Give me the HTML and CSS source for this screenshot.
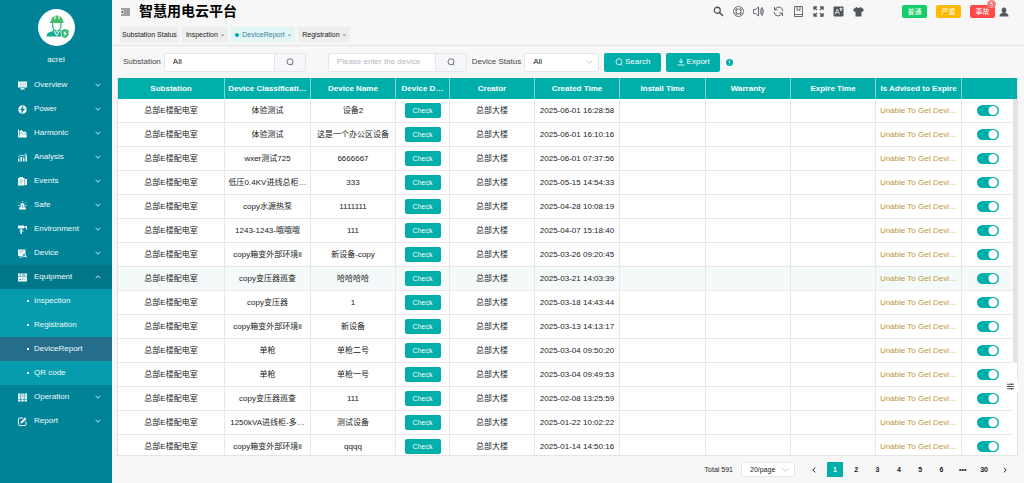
FILE: index.html
```
<!DOCTYPE html>
<html lang="en">
<head>
<meta charset="utf-8">
<title>智慧用电云平台</title>
<link rel="stylesheet" href="styles.css">
</head>
<body>
<svg class="defs" aria-hidden="true">
  <symbol id="down" viewBox="0 0 10 10"><path d="M1 3l4 4 4-4" fill="none" stroke="currentColor" stroke-width="1.4"/></symbol>
  <symbol id="search" viewBox="0 0 16 16"><circle cx="8" cy="7.5" r="6" fill="none" stroke="currentColor" stroke-width="1.6"/><path d="M11 12l3 3" stroke="currentColor" stroke-width="1.6"/></symbol>
</svg>
<div class="app">
  <aside class="sidebar">
    <div class="profile">
      <div class="avatar">
        <svg viewBox="0 0 37 37">
          <path d="M13 12.500c0-3 1.500-4.800 3.500-5.300v3h1V6.500h3v3.700h1v-3c2 .5 3.500 2.300 3.500 5.300h.5V14H12v-1.500z" fill="#48bd6c"/>
          <path d="M14.500 14c0 5.500 1.500 8 4.300 8s4.300-2.500 4.300-8" fill="none" stroke="#35b87c" stroke-width="1.200"/>
          <path d="M15.500 20.500l3.300 3 3.300-3 1.400 1.500v3.500l1.500 2H8.500c0-3 2-4.500 5.500-5z" fill="#14ae96"/>
          <path d="M16 22l2.800 4.500L21.500 22" fill="none" stroke="#fff" stroke-width="1"/>
          <path d="M27 19.500l4 1.500v3.500c0 2.500-1.500 4-4 5-2.500-1-4-2.500-4-5V21z" fill="#3dba78" stroke="#fff" stroke-width=".7"/>
          <path d="M27.500 21.500l-2.200 3.200h1.500l-.5 2.700 2.500-3.500h-1.600z" fill="#fff"/></svg>
      </div>
      <div class="username">acrel</div>
    </div>
    <nav class="menu">
      <a class="item" href="#"><svg class="ico" viewBox="0 0 18 18"><path d="M0 1h18v12H0zM6 14h6l2 3H4z" fill="currentColor"/><path d="M3 4h5M3 7h5M3 10h5M10 4h5v6h-5z" stroke="#7fc1cb" fill="none"/></svg><span>Overview</span><svg class="chev"><use href="#down"/></svg></a>
      <a class="item" href="#"><svg class="ico" viewBox="0 0 18 18"><circle cx="9" cy="9" r="8.500" fill="currentColor"/><path d="M10 2L5 10h3l-1 6 6-8H9.500zM0 9h4M14 9h4" fill="#008397" stroke="#008397" stroke-width=".8"/></svg><span>Power</span><svg class="chev"><use href="#down"/></svg></a>
      <a class="item" href="#"><svg class="ico" viewBox="0 0 18 18"><path d="M0 1h2v14h16v2H0zM3 4l4-2 4 4 3-1 3 2v8H3z" fill="currentColor"/><path d="M3 9l4-2 4 4 5-2" stroke="#008397" fill="none"/></svg><span>Harmonic</span><svg class="chev"><use href="#down"/></svg></a>
      <a class="item" href="#"><svg class="ico" viewBox="0 0 18 18"><path d="M0 11h3v6H0zM5 8h3v9H5zM10 9h3v8h-3zM15 4h3v13h-3z" fill="currentColor"/><path d="M0 8l6-4 4 2 7-5" stroke="currentColor" stroke-width="1.500" fill="none"/></svg><span>Analysis</span><svg class="chev"><use href="#down"/></svg></a>
      <a class="item" href="#"><svg class="ico" viewBox="0 0 18 18"><path d="M0 2h3V0h7v2h3v15H0zM14 4h4v12h-4z" fill="currentColor"/><path d="M3 6h7M3 9h7M3 12h5" stroke="#4fa8b6"/></svg><span>Events</span><svg class="chev"><use href="#down"/></svg></a>
      <a class="item" href="#"><svg class="ico" viewBox="0 0 18 18"><path d="M5 13V8c0-5 8-5 8 0v5h3v4H2v-4z" fill="currentColor"/><path d="M9 0v3M2 3l2 2M16 3l-2 2M0 9h3M15 9h3" stroke="currentColor" stroke-width="1.500"/><path d="M9 7l-1 4h2l-1 3" stroke="#008397" fill="none"/></svg><span>Safe</span><svg class="chev"><use href="#down"/></svg></a>
      <a class="item" href="#"><svg class="ico" viewBox="0 0 18 18"><path d="M0 1h12v6H0zM13 2h5v7h-2V6h-3zM5 8h3v3h3v2H8v5H5v-5H3v-2h2z" fill="currentColor"/></svg><span>Environment</span><svg class="chev"><use href="#down"/></svg></a>
      <a class="item" href="#"><svg class="ico" viewBox="0 0 18 18"><path d="M0 1h15v8l-4-1-3 3 1 3H0z" fill="currentColor"/><circle cx="12" cy="12" r="3" fill="none" stroke="currentColor" stroke-width="2"/><path d="M14 14l4 3M3 16h6" stroke="currentColor" stroke-width="2"/><path d="M3 4h9M3 7h5" stroke="#4fa8b6"/></svg><span>Device</span><svg class="chev"><use href="#down"/></svg></a>
      <a class="item open" href="#"><svg class="ico" viewBox="0 0 18 18"><path d="M0 1h18v6H0zM0 8h18v9H0z" fill="currentColor"/><path d="M3 4h3M8 4h7M3 13h3M8 12h3M13 12h2" stroke="#007789" stroke-width="1.600" fill="none"/></svg><span>Equipment</span><svg class="chev up"><use href="#down"/></svg></a>
      <div class="submenu">
        <a class="sub" href="#">Inspection</a>
        <a class="sub" href="#">Registration</a>
        <a class="sub current" href="#">DeviceReport</a>
        <a class="sub" href="#">QR code</a>
      </div>
      <a class="item" href="#"><svg class="ico" viewBox="0 0 18 18"><path d="M0 1h5v11H0zM6.500 1h5v11h-5zM13 1h5v11h-5zM0 13h5v4H0zM6.500 13h5v4h-5zM13 13h5v4h-5z" fill="currentColor"/><path d="M2.500 3v4M9 3v4M15.500 3v4" stroke="#4fa8b6" stroke-width="1.200"/></svg><span>Operation</span><svg class="chev"><use href="#down"/></svg></a>
      <a class="item" href="#"><svg class="ico" viewBox="0 0 18 18"><path d="M10 2H3q-2 0-2 2v11q0 2 2 2h11q2 0 2-2V9" fill="none" stroke="currentColor" stroke-width="2"/><path d="M5 13l1-4 8-8 3 3-8 8z" fill="currentColor"/></svg><span>Report</span><svg class="chev"><use href="#down"/></svg></a>
    </nav>
  </aside>

  <main class="main">
    <header class="topbar">
      <button class="fold" aria-label="Collapse menu"><svg viewBox="0 0 18 16"><path d="M0 2h18M5 6h13M5 10h13M0 14h18" stroke="#333" stroke-width="1.800"/><path d="M0 8l3.500-3v6z" fill="#333"/></svg></button>
      <h1>智慧用电云平台</h1>
      <div class="tools">
        <button aria-label="Search"><svg viewBox="0 0 22 22"><circle cx="8.500" cy="8.500" r="6" fill="none" stroke="currentColor" stroke-width="2.600"/><path d="M13 13l7 7" stroke="currentColor" stroke-width="3.200"/></svg></button>
        <button aria-label="Help"><svg viewBox="0 0 22 22" fill="none" stroke="currentColor" stroke-width="1.600"><circle cx="11" cy="11" r="10"/><circle cx="11" cy="11" r="5"/><path d="M5.500 3l3 4M16.500 3l-3 4M5.500 19l3-4M16.500 19l-3-4M3 6l4 3M19 6l-4 3M3 16l4-3M19 16l-4-3"/></svg></button>
        <button aria-label="Sound"><svg viewBox="0 0 22 22" fill="none" stroke="currentColor" stroke-width="1.700"><path d="M1 7h4l6-5v18l-6-5H1zM14 7q3 4 0 8M16 4q5 7 0 14M18 2q6 9 0 18"/></svg></button>
        <button aria-label="Refresh"><svg viewBox="0 0 22 22" fill="none" stroke="currentColor" stroke-width="1.800"><path d="M4 7q3-5 8-5 7 1 8 8M18 15q-3 5-8 5-7-1-8-8M3 2v6h6M19 20v-6h-6"/></svg></button>
        <button aria-label="Manual"><svg viewBox="0 0 22 22" fill="none" stroke="currentColor" stroke-width="1.700"><path d="M3 1h16v20H3zM3 17h16M8 1v8l3-2 3 2V1"/></svg></button>
        <button aria-label="Fullscreen"><svg viewBox="0 0 22 22" fill="none" stroke="currentColor" stroke-width="2.600"><path d="M2 8V2h6M14 2h6v6M20 14v6h-6M8 20H2v-6M2 2l6 6M20 2l-6 6M2 20l6-6M20 20l-6-6"/></svg></button>
        <button aria-label="Language"><svg viewBox="0 0 22 22"><rect x="1" y="1" width="20" height="20" rx="2" fill="currentColor"/><path d="M4 17L8.500 6 13 17M5.500 13h6M13 5h6M16 3v2M14 10l4-5M14 6l4 4" fill="none" stroke="#f7f7f7" stroke-width="1.500"/></svg></button>
        <button aria-label="Theme"><svg viewBox="0 0 22 22"><path d="M7 2q4 4 8 0l7 5-3 5-2-1v10H5V11l-2 1-3-5z" fill="currentColor"/></svg></button>
      </div>
      <div class="alarms">
        <button class="alarm normal">普通</button>
        <button class="alarm severe">严重</button>
        <button class="alarm accident">事故<span class="badge">5</span></button>
        <button class="user" aria-label="Account"><svg viewBox="0 0 22 22"><path d="M11 1c7 0 6 10 2.500 12 5 .5 7.500 2 7.500 8H1c0-6 2.500-7.500 7.500-8C5 11 4 1 11 1z" fill="#555a62"/></svg></button>
      </div>
    </header>
    <nav class="tabs">
      <a href="#" class="tab">Substation Status</a>
      <a href="#" class="tab">Inspection<span class="x">×</span></a>
      <a href="#" class="tab on"><i class="dot"></i>DeviceReport<span class="x">×</span></a>
      <a href="#" class="tab">Registration<span class="x">×</span></a>
    </nav>

    <form class="filters">
      <label for="station">Substation</label>
      <div class="group station"><input id="station" type="text" value="All"><button type="button" aria-label="Find substation"><svg><use href="#search"/></svg></button></div>
      <div class="group device"><input type="text" aria-label="Device name" placeholder="Please enter the device name"><button type="button" aria-label="Find device"><svg><use href="#search"/></svg></button></div>
      <label for="status">Device Status</label>
      <div class="pick status"><select id="status"><option>All</option></select><svg><use href="#down"/></svg></div>
      <button type="button" class="btn search"><svg><use href="#search"/></svg>Search</button>
      <button type="button" class="btn export"><svg viewBox="0 0 16 16"><path d="M8 1v9M4 6l4 4 4-4M1 14h14" stroke="currentColor" stroke-width="1.700" fill="none"/></svg>Export</button>
      <svg class="info" viewBox="0 0 14 14"><circle cx="7" cy="7" r="7" fill="#00aeaa"/><path d="M7 3v5M7 9.500V11" stroke="#fff" stroke-width="1.500"/></svg>
    </form>

    <section class="grid">
      <div class="scroll">
        <table>
          <colgroup><col class="c107"><col class="c86"><col class="c85"><col class="c54"><col class="c85"><col class="c85"><col class="c86"><col class="c85"><col class="c85"><col class="c86"><col class="c52"></colgroup>
          <thead><tr><th>Substation</th><th>Device Classificati…</th><th>Device Name</th><th>Device D…</th><th>Creator</th><th>Created Time</th><th>Install Time</th><th>Warranty</th><th>Expire Time</th><th>Is Advised to Expire</th><th></th></tr></thead>
          <tbody id="rows"></tbody>
        </table>
      </div>
      <div class="track"><div class="cap"></div><div class="thumb"></div></div>
    </section>

    <footer class="pager">
      <span>Total 591</span>
      <div class="pick size"><select aria-label="Page size"><option>20/page</option></select><svg><use href="#down"/></svg></div>
      <div class="pages">
        <button aria-label="Previous"><svg viewBox="0 0 10 10"><path d="M7 1L3 5l4 4" fill="none" stroke="currentColor" stroke-width="1.600"/></svg></button>
        <button class="active">1</button><button>2</button><button>3</button><button>4</button><button>5</button><button>6</button><button>•••</button><button>30</button>
        <button aria-label="Next"><svg viewBox="0 0 10 10"><path d="M3 1l4 4-4 4" fill="none" stroke="currentColor" stroke-width="1.600"/></svg></button>
      </div>
    </footer>
    <button class="settings" aria-label="Settings"><svg viewBox="0 0 14 14"><path d="M0 2.500h14M0 7h14M0 11.500h14M9 1v3M4 5.500v3M9 10v3" stroke="#222" stroke-width="1.500"/></svg></button>
  </main>
</div>
<script src="rows.js"></script>
</body>
</html>
```
FILE: styles.css
```
* { box-sizing: border-box; }
body { margin: 0; background: #f7f7f7; color: #222; font: 8px/12px "Liberation Sans", "Noto Sans CJK SC", sans-serif; }
button, input, select { font: inherit; color: inherit; margin: 0; padding: 0; border: 0; background: none; }
a { color: inherit; text-decoration: none; }
svg { display: block; flex: none; }
.defs { position: absolute; width: 0; height: 0; }
.app { display: flex; height: 100vh; overflow: hidden; }

.sidebar { width: 112px; flex: none; background: #008397; color: #f2fbfc; }
.profile { height: 73px; padding-top: 9px; display: flex; flex-direction: column; align-items: center; gap: 8px; }
.avatar { width: 37px; height: 37px; border-radius: 50%; background: #fff; }
.item { display: flex; align-items: center; height: 24px; padding: 0 11px 0 18px; }
.item span { flex: 1; margin-left: 7px; }
.ico { width: 9px; height: 9px; }
.chev { width: 6px; height: 6px; }
.up { transform: rotate(180deg); }
.open { background: #007789; }
.submenu { background: #069cad; }
.sub { display: flex; align-items: center; gap: 5px; height: 24px; padding-left: 27px; }
.sub::before { content: ""; width: 2px; height: 2px; background: #fff; }
.current { background: #246e8c; }

.main { position: relative; flex: 1; min-width: 0; display: flex; flex-direction: column; }
.topbar { display: flex; align-items: center; height: 23px; padding: 0 15px 0 9px; flex: none; color: #50555c; }
.fold svg { width: 9px; height: 8px; }
h1 { margin: 0 0 0 9px; font: bold 14px/20px "Noto Sans CJK SC", sans-serif; color: #000; height: 24px; }
.tools { display: flex; gap: 9px; margin-left: auto; }
.tools svg { width: 11px; height: 11px; }
.tools button { width: 11px; }
.alarms { display: flex; align-items: center; gap: 9px; margin-left: 38px; }
.alarm { position: relative; width: 25px; height: 13px; border-radius: 2px; color: #fff; font-size: 7px; line-height: 13px; }
.normal { background: #13ce66; }
.severe { background: #ffba00; }
.accident { background: #ff4949; }
.badge { position: absolute; top: -5px; right: -1px; width: 9px; height: 8px; border-radius: 4px; background: #f56c6c; border: 1px solid #f99; font-size: 6px; line-height: 6px; }
.user { margin-left: -5px; }
.user svg { width: 10px; height: 10px; }

.tabs { display: flex; gap: 3px; padding: 4px 8px 3px; border-bottom: 1px solid #e6e6e6; flex: none; }
.tab { display: flex; align-items: center; height: 15px; padding: 0 2px; background: #eee; font-size: 7px; color: #222; gap: 3px; }
.tab:not(:first-child) { padding: 0 4px; }
.on { background: #e3f6f6; color: #3d7f9b; }
.dot { width: 4px; height: 4px; border-radius: 50%; background: #00aeaa; }
.x { font-size: 6px; color: #888; }

.filters { display: flex; align-items: center; height: 32px; padding: 0 11px; flex: none; color: #444; }
.group { display: flex; height: 19px; border: 1px solid #e4e7ed; border-radius: 2px; background: #fff; overflow: hidden; }
.group input { flex: 1; min-width: 0; padding-left: 8px; color: #222; }
.group input::placeholder { color: #b4b9c2; opacity: 1; }
.group button { width: 31px; background: #f5f7fa; border-left: 1px solid #e4e7ed; display: grid; place-items: center; color: #555; }
.group svg, .btn svg { width: 8px; height: 8px; }
.station { width: 142px; margin: 0 22px 0 3px; }
.device { width: 139px; margin-right: 5px; }
.device input { margin-right: 12px; }
.pick { position: relative; background: #fff; border: 1px solid #e4e7ed; border-radius: 2px; color: #222; }
.pick select { appearance: none; width: 100%; height: 100%; padding-left: 8px; }
.pick svg { position: absolute; right: 5px; top: 50%; width: 7px; height: 7px; transform: translateY(-50%); color: #c0c4cc; pointer-events: none; }
.status { width: 75px; height: 19px; margin: 0 5px 0 3px; }
.filters label { flex: none; }
.btn { display: flex; align-items: center; justify-content: center; gap: 2px; height: 19px; border-radius: 2px; background: #00aeaa; color: #fff; }
.search { width: 57px; margin-right: 5px; }
.export { width: 54px; margin-right: 6px; }
.info { width: 7px; height: 7px; }

.grid { flex: 1; min-height: 0; display: flex; margin: 0 6px 0 5px; border: 1px solid #e4e4e4; border-top: 0; background: #fff; overflow: hidden; }
.scroll { flex: 1; min-width: 0; overflow: hidden; }
table { width: 100%; table-layout: fixed; border-collapse: separate; border-spacing: 0; }
.c107 { width: 107px; } .c86 { width: 86px; } .c85 { width: 85px; } .c54 { width: 54px; } .c52 { width: 53px; }
th, td { padding: 0 2px; text-align: center; white-space: nowrap; overflow: hidden; border-right: 1px solid #e8e8e8; }
th { height: 21px; background: #00aeaa; color: #fff; border-right-color: #7fd4d2; }
td { height: 24px; border-bottom: 1px solid #e8e8e8; }
.hover td { background: #f3faf9; }
td.warn { color: #c0963c; }
.check { display: block; margin: 0 auto; width: 36px; height: 15px; border-radius: 2px; background: #00aeaa; color: #fff; font-size: 7px; }
.switch { appearance: none; display: block; margin: 0 auto; width: 22px; height: 11px; border-radius: 6px; background: radial-gradient(circle at 16px 50%, #fff 4px, #00aeaa 5px); }
.track { width: 4px; flex: none; display: flex; flex-direction: column; }
.cap { height: 21px; background: #00aeaa; }
.thumb { height: 70%; background: #e2e2e2; border-radius: 0 0 2px 2px; }

.pager { display: flex; align-items: center; justify-content: flex-end; height: 27px; padding: 0 8px; flex: none; font-size: 7px; }
.size { width: 54px; height: 15px; margin: 0 8px; }
.pages { display: grid; grid-template-columns: repeat(10, 1fr); width: 213px; justify-items: center; }
.pages button { width: 16px; height: 15px; display: grid; place-items: center; font-weight: bold; }
.pages svg { width: 6px; height: 6px; }
.pages .active { background: #00aeaa; color: #fff; }
.settings { position: absolute; right: 6px; top: 379px; width: 16px; height: 14px; display: grid; place-items: center; background: #fff; border-radius: 2px; }
.settings svg { width: 7px; height: 7px; }
```
FILE: rows.js
```
const rows = [
  ["体验测试", "设备2", "2025-06-01 16:28:58"],
  ["体验测试", "这是一个办公区设备", "2025-06-01 16:10:16"],
  ["wxer测试725", "6666667", "2025-06-01 07:37:56"],
  ["低压0.4KV进线总柜…", "333", "2025-05-15 14:54:33"],
  ["copy水源热泵", "1111111", "2025-04-28 10:08:19"],
  ["1243-1243-哦哦哦", "111", "2025-04-07 15:18:40"],
  ["copy箱变外部环境ii", "新设备-copy", "2025-03-26 09:20:45"],
  ["copy变压器巡查", "哈哈哈哈", "2025-03-21 14:03:39"],
  ["copy变压器", "1", "2025-03-18 14:43:44"],
  ["copy箱变外部环境ii", "新设备", "2025-03-13 14:13:17"],
  ["单枪", "单枪二号", "2025-03-04 09:50:20"],
  ["单枪", "单枪一号", "2025-03-04 09:49:53"],
  ["copy变压器巡查", "111", "2025-02-08 13:25:59"],
  ["1250kVA进线柜-多…", "测试设备", "2025-01-22 10:02:22"],
  ["copy箱变外部环境ii", "qqqq", "2025-01-14 14:50:16"]
];
document.getElementById("rows").innerHTML = rows.map(([kind, name, time], i) =>
  `<tr class="${i === 7 ? "hover" : ""}"><td>总部E楼配电室</td><td>${kind}</td><td>${name}</td><td><button class="check">Check</button></td><td>总部大楼</td><td>${time}</td><td></td><td></td><td></td><td class="warn">Unable To Get Devi…</td><td><input class="switch" type="checkbox" checked aria-label="Enable ${name}"></td></tr>`
).join("");
```
